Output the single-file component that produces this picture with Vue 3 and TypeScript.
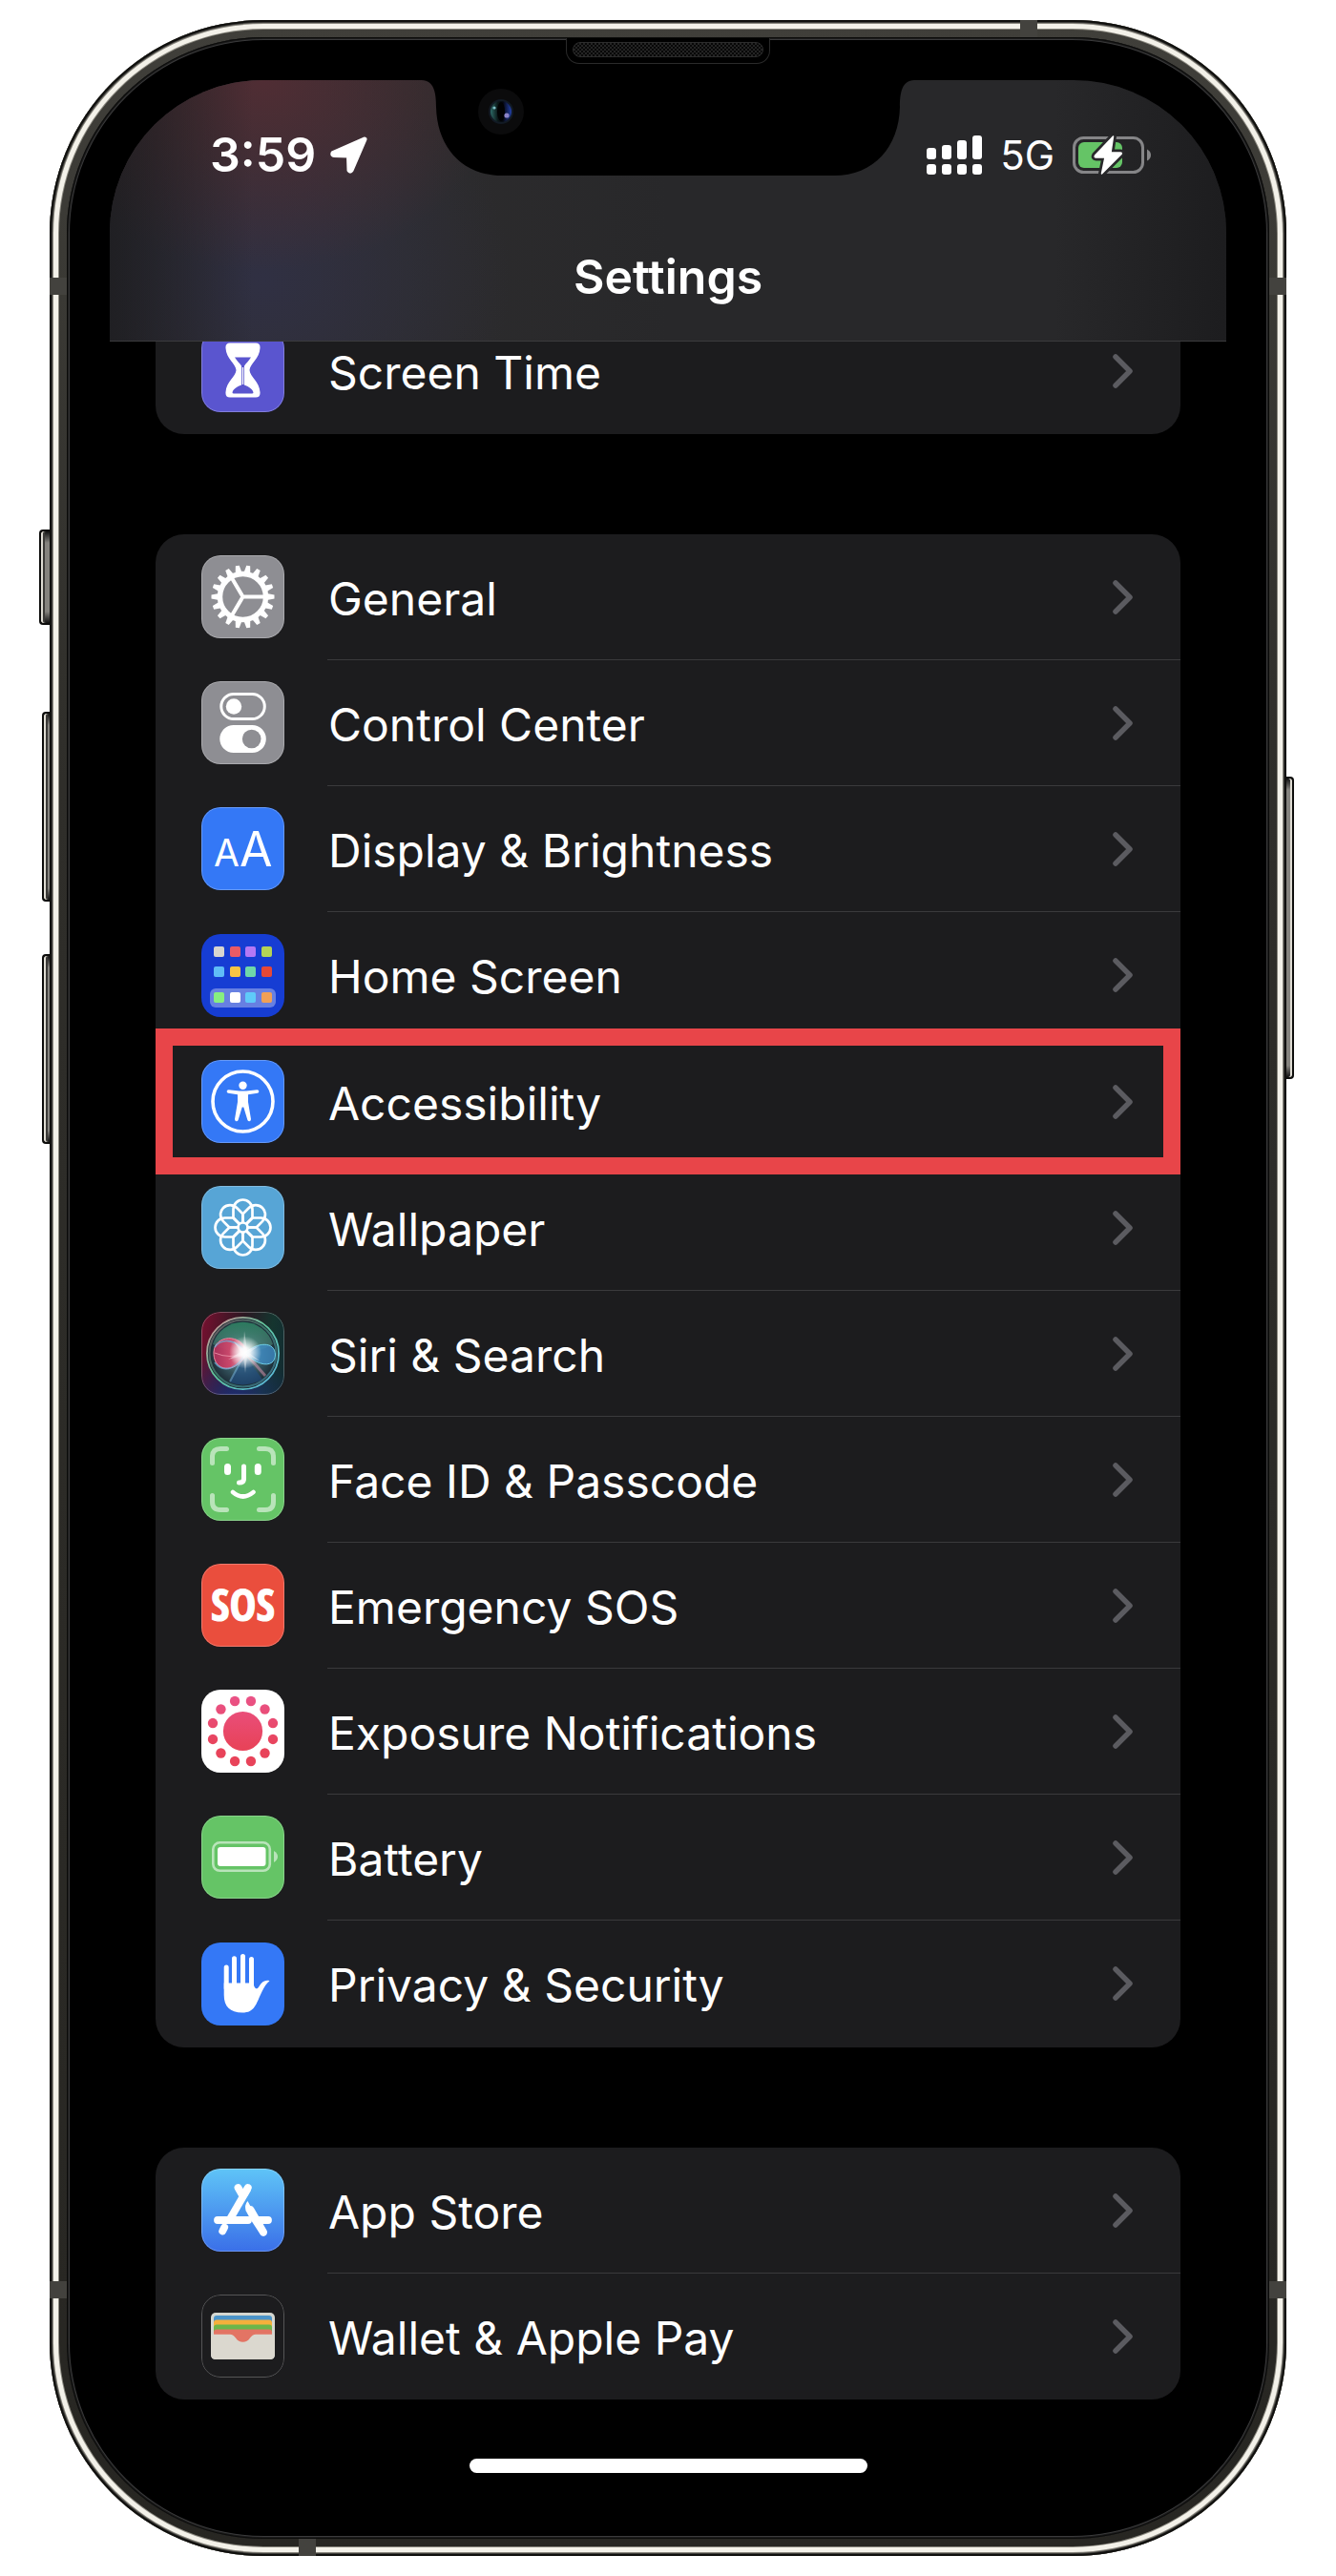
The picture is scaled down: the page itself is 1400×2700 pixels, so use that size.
<script setup lang="ts">
interface Row {
  id: string
  label: string
  plain?: boolean
  highlighted?: boolean
}

const groups: Row[][] = [
  [{ id: 'screen-time', label: 'Screen Time' }],
  [
    { id: 'general', label: 'General' },
    { id: 'control-center', label: 'Control Center' },
    { id: 'display', label: 'Display & Brightness' },
    { id: 'home-screen', label: 'Home Screen', plain: true },
    { id: 'accessibility', label: 'Accessibility', highlighted: true },
    { id: 'wallpaper', label: 'Wallpaper' },
    { id: 'siri', label: 'Siri & Search' },
    { id: 'face-id', label: 'Face ID & Passcode' },
    { id: 'sos', label: 'Emergency SOS' },
    { id: 'exposure', label: 'Exposure Notifications' },
    { id: 'battery', label: 'Battery' },
    { id: 'privacy', label: 'Privacy & Security', plain: true },
  ],
  [
    { id: 'app-store', label: 'App Store' },
    { id: 'wallet', label: 'Wallet & Apple Pay' },
  ],
]

const gearTeeth = Array.from({ length: 18 }, (_, i) => i * 20)
const petals = Array.from({ length: 8 }, (_, i) => i * 45)
const exposureDots = Array.from({ length: 12 }, (_, i) => i * 30 + 15)

const columns = [13, 30, 46, 63]
const homeApps = [
  ['#d8d6cf', '#e85b66', '#b478f5', '#b5d355'],
  ['#5fbdf7', '#f7c544', '#6fd8a9', '#e64837'],
  ['#87ef80', '#ffffff', '#5fcaf9', '#f0a056'],
]
const homeRows = [13, 34, 61]
</script>

<template>
  <div class="page">
    <div class="phone">
      <span class="key key-mute"></span>
      <span class="key key-up"></span>
      <span class="key key-down"></span>
      <span class="key key-power"></span>
      <span class="band band-left-top"></span>
      <span class="band band-right-top"></span>
      <span class="band band-left-bottom"></span>
      <span class="band band-right-bottom"></span>
      <span class="band band-top"></span>
      <span class="band band-bottom"></span>

      <div class="glass">
        <div class="speaker"><span class="grille"></span></div>

        <header class="nav">
          <svg class="notch" width="516" height="101" viewBox="0 0 516 101" aria-hidden="true">
            <defs>
              <linearGradient id="lens" x1="0" x2="1" y1="0" y2="0">
                <stop offset="0" stop-color="#2d6a66" />
                <stop offset=".35" stop-color="#0a1516" />
                <stop offset=".6" stop-color="#04060f" />
                <stop offset="1" stop-color="#2340a8" />
              </linearGradient>
            </defs>
            <path d="M0 0C13 0 15 14 15 28C16 70 42 100 84 100H432C474 100 500 70 501 28C501 14 503 0 516 0Z" fill="#000" />
            <circle cx="83" cy="33" r="24" fill="#0b0b0c" />
            <circle cx="83" cy="33" r="13" fill="#121a24" />
            <circle cx="83" cy="33" r="11" fill="url(#lens)" />
            <ellipse cx="83" cy="33" rx="4" ry="10" fill="#010203" />
            <circle cx="76" cy="29" r="1.6" fill="#7fc0c8" />
            <circle cx="89" cy="37" r="2.6" fill="#8b84c8" />
          </svg>

          <div class="status">
            <div class="status-side">
              <span class="time">3:59</span>
              <svg width="39" height="39" viewBox="0 0 39 39" aria-hidden="true">
                <path d="M36 3L3 17.500C2.500 19 3 19.500 4 19.500L19.500 20L20 35.500C20.500 36.500 21.500 36.500 22 35.500Z" fill="#fff" stroke="#fff" stroke-width="5" stroke-linejoin="round" />
              </svg>
            </div>
            <div class="status-side status-right">
              <svg width="58" height="41" viewBox="0 0 58 41" fill="#fff" aria-hidden="true">
                <rect y="13" width="10" height="12" rx="3" />
                <rect x="16" y="10" width="10" height="15" rx="3" />
                <rect x="32" y="5" width="10" height="20" rx="3" />
                <rect x="48" width="10" height="25" rx="3" />
                <rect y="30" width="10" height="11" rx="3" />
                <rect x="16" y="30" width="10" height="11" rx="3" />
                <rect x="32" y="30" width="10" height="11" rx="3" />
                <rect x="48" y="30" width="10" height="11" rx="3" />
              </svg>
              <span class="network">5G</span>
              <svg width="82" height="41" viewBox="0 -1 82 41" aria-hidden="true">
                <rect x="1.500" y="1.500" width="72" height="36" rx="10" fill="none" stroke="#858587" stroke-width="3" />
                <path d="M78 13.500Q82 15.500 82 19.500T78 25.500Z" fill="#858587" />
                <rect x="6" y="6" width="46" height="27" rx="6" fill="#65c466" />
                <path d="M42.500 0L23.500 20Q22.500 22 24.500 22H34L30.500 39L51 18.500Q52 17 50 17H40Z" fill="#fff" stroke="#28282a" stroke-width="7" stroke-linejoin="round" />
                <path d="M42.500 0L23.500 20Q22.500 22 24.500 22H34L30.500 39L51 18.500Q52 17 50 17H40Z" fill="#fff" stroke="#fff" stroke-width="1.500" stroke-linejoin="round" />
              </svg>
            </div>
          </div>
          <h1 class="title">Settings</h1>
        </header>

        <main class="groups">
          <ul v-for="(group, index) in groups" :key="index" class="card">
            <li
              v-for="row in group"
              :key="row.id"
              class="item"
              :class="{ 'item-plain': row.plain, 'item-highlighted': row.highlighted }"
            >
              <a class="row" :href="'#' + row.id">
                <span class="tile" :class="'tile-' + row.id">
                  <svg width="87" height="87" viewBox="0 0 87 87" aria-hidden="true">
                    <g v-if="row.id === 'screen-time'">
                      <path d="M30 14.500H57Q62 14.500 61.500 20C61 31 51 36 50.500 43C51 50 61 55 61.500 66Q62 71.500 57 71.500H30Q25 71.500 25.500 66C26 55 36 50 36.500 43C36 36 26 31 25.500 20Q25 14.500 30 14.500Z" fill="#fff" />
                      <path d="M35 29.500H52C50 33 46.500 36 45 38.500V58.500C50 60.500 54 63 54.500 66.500Q54.500 67.500 53 67.500H34Q32.500 67.500 32.500 66.500C33 63 37 60.500 42 58.500V38.500C40.500 36 37 33 35 29.500Z" fill="#5a55cf" />
                      <path d="M43.500 40V58" stroke="#fff" stroke-width="1.400" />
                    </g>

                    <g v-else-if="row.id === 'general'" fill="#fff">
                      <path v-for="angle in gearTeeth" :key="angle" d="M66 39.600L76.500 41.500V45.500L66 47.400Z" :transform="`rotate(${angle} 43.5 43.5)`" />
                      <circle cx="43.500" cy="43.500" r="24" fill="none" stroke="#fff" stroke-width="5.400" />
                      <path d="M43.500 43.500H66M43.500 43.500L32 24M43.500 43.500L32 63" fill="none" stroke="#fff" stroke-width="4" />
                    </g>

                    <g v-else-if="row.id === 'control-center'">
                      <rect x="20.800" y="13.500" width="45.500" height="26" rx="13" fill="none" stroke="#fff" stroke-width="3" />
                      <circle cx="34" cy="26.500" r="8.200" fill="#fff" />
                      <rect x="19.300" y="46" width="48.500" height="29" rx="14.500" fill="#fff" />
                      <circle cx="52.700" cy="60.500" r="9.800" fill="#8e8e93" />
                    </g>

                    <g v-else-if="row.id === 'display'" class="glyph-text" fill="#fff">
                      <text x="13" y="62" font-size="39">A</text>
                      <text x="40" y="62" font-size="50">A</text>
                    </g>

                    <g v-else-if="row.id === 'home-screen'">
                      <rect x="9" y="57" width="69" height="20" rx="6" fill="#fff" fill-opacity=".35" />
                      <template v-for="(colors, r) in homeApps" :key="r">
                        <rect v-for="(color, c) in colors" :key="c" :x="columns[c]" :y="homeRows[r]" width="11" height="11" rx="2" :fill="color" />
                      </template>
                    </g>

                    <g v-else-if="row.id === 'accessibility'">
                      <circle cx="43.500" cy="43.500" r="31.500" fill="none" stroke="#fff" stroke-width="3.600" />
                      <circle cx="43.500" cy="26.800" r="4.200" fill="#fff" />
                      <path d="M28.500 31.200L40 32.400H47L58.500 31.200Q60.500 31.300 60.300 33.200Q60.200 34.500 58.800 34.700L49 36.200V44L52 62Q52 64 50.500 64.300Q49 64.500 48.400 63L44.300 49.500H42.700L38.600 63Q38 64.500 36.500 64.300Q35 64 35 62L38 44V36.200L28.200 34.700Q26.800 34.500 26.700 33.200Q26.500 31.300 28.500 31.200Z" fill="#fff" />
                    </g>

                    <g v-else-if="row.id === 'wallpaper'" fill="none" stroke="#fff" stroke-width="2.700" stroke-linejoin="round">
                      <path v-for="angle in petals" :key="angle" d="M33.500 24.500A10 10 0 0 1 53.500 24.500V33.500L43.500 43.500L33.500 33.500Z" :transform="`rotate(${angle} 43.5 43.5)`" />
                      <circle cx="43.500" cy="43.500" r="5" fill="#57a5d6" />
                    </g>

                    <g v-else-if="row.id === 'siri'">
                      <defs>
                        <radialGradient id="siri-orb" cx=".5" cy=".5" r=".5">
                          <stop offset="0" stop-color="#7fb5b5" />
                          <stop offset=".6" stop-color="#33525c" />
                          <stop offset="1" stop-color="#16222c" />
                        </radialGradient>
                        <linearGradient id="siri-rim" x1="0" y1="0" x2="1" y2="1">
                          <stop offset="0" stop-color="#e08a97" />
                          <stop offset=".45" stop-color="#5fc59b" />
                          <stop offset="1" stop-color="#5ab6e6" />
                        </linearGradient>
                        <linearGradient id="siri-top" x1="0" y1="0" x2="0" y2="1">
                          <stop offset="0" stop-color="#2b7a5e" />
                          <stop offset="1" stop-color="#5f9f8c" stop-opacity=".3" />
                        </linearGradient>
                        <linearGradient id="siri-pink" x1="0" y1="0" x2="1" y2="0">
                          <stop offset="0" stop-color="#b5305c" />
                          <stop offset=".5" stop-color="#d8446a" />
                          <stop offset="1" stop-color="#f3b6c4" />
                        </linearGradient>
                        <radialGradient id="siri-glow">
                          <stop offset="0" stop-color="#fff" />
                          <stop offset=".3" stop-color="#fff" stop-opacity=".9" />
                          <stop offset="1" stop-color="#fff" stop-opacity="0" />
                        </radialGradient>
                      </defs>
                      <circle cx="43.500" cy="43.500" r="38" fill="url(#siri-orb)" />
                      <path d="M12 34A33 33 0 0 1 75 34Q60 42 46 43Q28 42 12 34Z" fill="url(#siri-top)" />
                      <path d="M46 45L30 74Q46 80 64 71Z" fill="#1f4f86" fill-opacity=".6" />
                      <path d="M46 43L30 73" stroke="#78b8e8" stroke-opacity=".5" stroke-width="2" />
                      <path d="M46 43L67 67" stroke="#e39ab4" stroke-opacity=".5" stroke-width="3" />
                      <path d="M48 42C42 22 14 24 13 42C12 64 38 66 48 42Z" fill="url(#siri-pink)" fill-opacity=".9" stroke="#f28aa2" stroke-width="1" />
                      <path d="M14 53C24 66 40 58 46 43M14 37C22 26 38 30 46 42" fill="none" stroke="#6fb4dd" stroke-width="1.600" stroke-opacity=".7" />
                      <path d="M14 43Q30 50 46 43" fill="none" stroke="#f5a5b8" stroke-width="1" stroke-opacity=".7" />
                      <path d="M46 43C58 32 77 30 77.500 45C77 59 60 58 46 43Z" fill="#3f8fcb" fill-opacity=".75" stroke="#6fd0e8" stroke-width="1" />
                      <circle cx="46" cy="42.500" r="17" fill="url(#siri-glow)" />
                      <path d="M45 20L48 40L60 36L50 43L62 52L48 46L46 64L44 46L28 50L41 42L34 31L44 39Z" fill="#fff" fill-opacity=".4" />
                      <circle cx="43.500" cy="43.500" r="35" fill="none" stroke="url(#siri-rim)" stroke-width="2" stroke-opacity=".45" />
                      <circle cx="43.500" cy="43.500" r="37.600" fill="none" stroke="url(#siri-rim)" stroke-width="1.800" />
                    </g>

                    <g v-else-if="row.id === 'face-id'" fill="none" stroke="#fff" stroke-linecap="round" stroke-linejoin="round">
                      <path d="M11.500 26.500V20Q11.500 11.500 20 11.500H26.500M60.500 11.500H67Q75.500 11.500 75.500 20V26.500M75.500 60.500V67Q75.500 75.500 67 75.500H60.500M26.500 75.500H20Q11.500 75.500 11.500 67V60.500" stroke-width="5" stroke-opacity=".55" />
                      <path d="M27.500 30.500V35.500M59.300 30.500V35.500" stroke-width="7" />
                      <path d="M44.500 30V43Q44.500 47 39.500 47" stroke-width="5" />
                      <path d="M33 57Q43.500 66 54.500 57" stroke-width="4.600" />
                    </g>

                    <g v-else-if="row.id === 'sos'" class="glyph-sos" fill="#fff" stroke="#fff">
                      <text x="43.500" y="60" text-anchor="middle" font-size="47">SOS</text>
                    </g>

                    <g v-else-if="row.id === 'exposure'">
                      <defs>
                        <linearGradient id="exposure-fill" gradientUnits="userSpaceOnUse" x1="0" y1="6" x2="0" y2="60">
                          <stop offset="0" stop-color="#ea5388" />
                          <stop offset="1" stop-color="#e8435a" />
                        </linearGradient>
                      </defs>
                      <circle cx="43.500" cy="43.500" r="20.600" fill="url(#exposure-fill)" />
                      <circle
                        v-for="angle in exposureDots"
                        :key="angle"
                        :cx="43.5 + 32.6 * Math.cos((angle * Math.PI) / 180)"
                        :cy="43.5 + 32.6 * Math.sin((angle * Math.PI) / 180)"
                        r="5.200"
                        fill="url(#exposure-fill)"
                      />
                    </g>

                    <g v-else-if="row.id === 'battery'">
                      <rect x="12.300" y="28.300" width="59.500" height="29.500" rx="7" fill="none" stroke="#fff" stroke-opacity=".55" stroke-width="2.600" />
                      <rect x="17" y="33" width="50.500" height="20" rx="3" fill="#fff" />
                      <path d="M76 37Q80 39.500 80 43T76 49Z" fill="#fff" fill-opacity=".55" />
                    </g>

                    <g v-else-if="row.id === 'privacy'">
                      <path d="M26.200 26V48M34.500 16.700V48M43.500 14.500V48M52.500 17.500V48" fill="none" stroke="#fff" stroke-width="5" stroke-linecap="round" />
                      <path d="M23.700 42.500H55V45C56.500 49 58.500 49.500 60.500 46C63.500 41 67 39 71.500 40.200C68 43 66 46.500 63.500 51.500C57 65 56 73.500 43 73.500C30 73.500 23.700 67 23.700 55Z" fill="#fff" />
                    </g>

                    <g v-else-if="row.id === 'app-store'" fill="none" stroke="#fff" stroke-width="7.800" stroke-linecap="round">
                      <path d="M48.800 20L44.500 27.500M38.500 20L42.500 27" />
                      <path d="M48.500 21L28.500 55.500" stroke-linecap="butt" />
                      <path d="M17 54H49M67 54H70" />
                      <path d="M52 54L46.500 44Q45 38 48.500 34L54 44L68.500 69Q66 72 62.500 70Z" fill="#fff" stroke="none" />
                      <path d="M51.500 43L65 66.500M60 54H68" />
                      <path d="M24.200 61.500L22.200 65.500" />
                    </g>

                    <g v-else-if="row.id === 'wallet'">
                      <rect x="10" y="19" width="67" height="49" rx="5" fill="#d5d7d0" />
                      <rect x="13" y="22" width="61" height="20" rx="3" fill="#4c94c8" />
                      <rect x="13" y="26.500" width="61" height="16" rx="3" fill="#f5b03c" />
                      <rect x="13" y="31.500" width="61" height="12" rx="3" fill="#6db64a" />
                      <rect x="13" y="36.500" width="61" height="16" rx="3" fill="#e37464" />
                      <path d="M10 41.700H30Q33.500 41.700 36 45.500Q39 49.800 43.500 49.800T51 45.500Q53.500 41.700 57 41.700H77V63Q77 68 72 68H15Q10 68 10 63Z" fill="#dbd8cf" />
                    </g>
                  </svg>
                </span>
                <span class="label">{{ row.label }}</span>
                <svg class="chevron" width="22" height="36" viewBox="0 0 22 36" aria-hidden="true">
                  <path d="M3 3L18 18L3 33" fill="none" stroke="#5b5b60" stroke-width="5.500" stroke-linecap="round" stroke-linejoin="round" />
                </svg>
              </a>
            </li>
          </ul>
        </main>

        <div class="home-indicator"></div>
      </div>
    </div>
  </div>
</template>

<style>
body {
  margin: 0;
  background: #fff;
}
</style>

<style scoped>
.page {
  box-sizing: border-box;
  min-width: 1000px;
  padding: 21px 52px;
  font-family: Inter, "Liberation Sans", sans-serif;
  color: #fff;
}

.phone {
  position: relative;
  padding: 18px;
  border-radius: 224px;
  background: linear-gradient(#403f3a, #2f2e2a 30%, #272622);
  box-shadow:
    inset 0 0 0 2px #10100e,
    inset 0 0 0 3px #3e3d3a,
    inset 0 0 0 4px #86847c,
    inset 0 0 0 9px #f3f1e9,
    inset 0 0 0 10px #8b8980;
}

.glass {
  position: relative;
  padding: 45px 45px 69px;
  border-radius: 206px;
  background: #000;
  box-shadow:
    inset 0 0 0 1px #0c0c0b,
    inset 0 0 0 2px #1c1c1c,
    inset 0 0 0 3px #3a3a3b;
}

.key {
  position: absolute;
  box-sizing: border-box;
  border: 2px solid #0d0d0c;
  background: linear-gradient(#111, #85837e 12px, #85837e calc(100% - 12px), #111);
}

.key-mute,
.key-up,
.key-down {
  border-right: 0;
  border-radius: 4px 0 0 4px;
  box-shadow: inset 2px 0 0 #dedbd2, inset 4px 0 0 #3a3936;
}

.key-mute {
  top: 534px;
  left: -11px;
  width: 11px;
  height: 100px;
}

.key-up,
.key-down {
  left: -8px;
  width: 8px;
  height: 199px;
}

.key-up {
  top: 725px;
}

.key-down {
  top: 979px;
}

.key-power {
  top: 793px;
  right: -8px;
  width: 8px;
  height: 317px;
  border-left: 0;
  border-radius: 0 4px 4px 0;
  box-shadow: inset -2px 0 0 #dedbd2;
}

.band {
  position: absolute;
  width: 18px;
  height: 18px;
  background: #43423e;
}

.band-left-top {
  top: 270px;
  left: 0;
}

.band-right-top {
  top: 270px;
  right: 0;
}

.band-left-bottom {
  bottom: 270px;
  left: 0;
}

.band-right-bottom {
  right: 0;
  bottom: 270px;
}

.band-top {
  top: 0;
  right: 261px;
}

.band-bottom {
  bottom: 0;
  left: 261px;
}

.speaker {
  position: absolute;
  top: 1px;
  left: 50%;
  box-sizing: border-box;
  width: 214px;
  height: 27px;
  margin-left: -107px;
  padding: 4px 6px;
  border: 1px solid #2a2a2a;
  border-top: 0;
  border-radius: 0 0 14px 14px;
  background: #000;
}

.grille {
  display: block;
  height: 14px;
  border: 1px solid #2c2c2c;
  border-radius: 8px;
  background: repeating-conic-gradient(#242424 0 25%, #080808 0 50%) 0 0 / 4px 4px;
}

.nav {
  position: relative;
  z-index: 1;
  box-sizing: border-box;
  padding-bottom: 16px;
  border-bottom: 1px solid #3b3b3d;
  border-radius: 160px 160px 0 0;
  background:
    linear-gradient(90deg, rgba(24, 24, 26, 0.7), rgba(24, 24, 26, 0) 150px),
    linear-gradient(270deg, rgba(24, 24, 26, 0.7), rgba(24, 24, 26, 0) 180px),
    radial-gradient(ellipse 250px 200px at 160px 0, #502d34, rgba(80, 45, 52, 0)),
    radial-gradient(ellipse 260px 240px at 160px 210px, #303043, rgba(48, 48, 67, 0)),
    linear-gradient(90deg, #323031, #28282a 50%);
}

.notch {
  position: absolute;
  top: 0;
  left: 50%;
  margin-left: -258px;
}

.status {
  display: flex;
  align-items: center;
  justify-content: space-between;
  height: 156px;
  padding: 0 79px 0 105px;
}

.status-side {
  display: flex;
  align-items: center;
  gap: 15px;
}

.status-right {
  gap: 19px;
}

.time {
  font-size: 50px;
  font-weight: 600;
  line-height: 60px;
}

.network {
  padding-top: 2px;
  font-size: 42px;
  line-height: 50px;
}

.title {
  margin: 0;
  font-size: 50px;
  font-weight: 600;
  line-height: 101px;
  text-align: center;
}

.groups {
  display: flex;
  flex-direction: column;
  gap: 105px;
  margin-top: -35px;
  padding: 0 48px;
}

.card {
  margin: 0;
  padding: 0;
  list-style: none;
  border-radius: 30px;
  background: #1c1c1e;
}

.item {
  position: relative;
}

.row {
  display: flex;
  align-items: center;
  box-sizing: border-box;
  height: 132px;
  padding: 0 49px 1px 48px;
  color: inherit;
  text-decoration: none;
}

.item-plain .row {
  height: 133px;
}

.item:not(:last-child, .item-plain, .item-highlighted)::after {
  content: "";
  position: absolute;
  right: 0;
  bottom: 0;
  left: 180px;
  height: 1px;
  background: #3a3a3c;
}

.item-highlighted::before {
  content: "";
  position: absolute;
  inset: -11px 0 -10px;
  z-index: 1;
  border: 18px solid #e84549;
  pointer-events: none;
}

.tile {
  display: block;
  flex: none;
  width: 87px;
  height: 87px;
  margin-right: 46px;
  border-radius: 20px;
  overflow: hidden;
  position: relative;
}

.tile::after {
  content: "";
  position: absolute;
  inset: 0;
  border: 1px solid rgba(255, 255, 255, 0.25);
  border-radius: 20px;
}

.tile svg {
  display: block;
}

.tile-screen-time {
  background: #5a55cf;
}

.tile-general,
.tile-control-center {
  background: #8e8e93;
}

.tile-display,
.tile-accessibility,
.tile-privacy {
  background: #3478f6;
}

.tile-home-screen {
  background: #163dd3;
}

.tile-home-screen::after,
.tile-privacy::after {
  border: 0;
}

.tile-wallpaper {
  background: #57a5d6;
}

.tile-siri {
  background:
    radial-gradient(circle at 40% 110%, #1d2f78, rgba(29, 47, 120, 0) 55%),
    linear-gradient(100deg, #7a1030, #2a1822 45%, #15352f 75%, #122a33);
}

.tile-face-id,
.tile-battery {
  background: #65c466;
}

.tile-sos {
  background: #ea4e3d;
}

.tile-exposure {
  background: #fff;
}

.tile-app-store {
  background: linear-gradient(#5fc4f7, #3a6fe8);
}

.tile-wallet {
  background: #1c1c1e;
}

.glyph-text {
  font-family: Inter, sans-serif;
  font-weight: 400;
}

.glyph-sos {
  font-family: "Liberation Sans Narrow", "Open Sans Condensed", Roboto, sans-serif;
  font-weight: 700;
}

.label {
  flex: 1;
  padding-top: 4px;
  font-size: 48px;
  line-height: 60px;
  white-space: nowrap;
}

.chevron {
  flex: none;
}

.home-indicator {
  width: 417px;
  height: 15px;
  margin: 62px auto 0;
  border-radius: 8px;
  background: #fff;
}
</style>
